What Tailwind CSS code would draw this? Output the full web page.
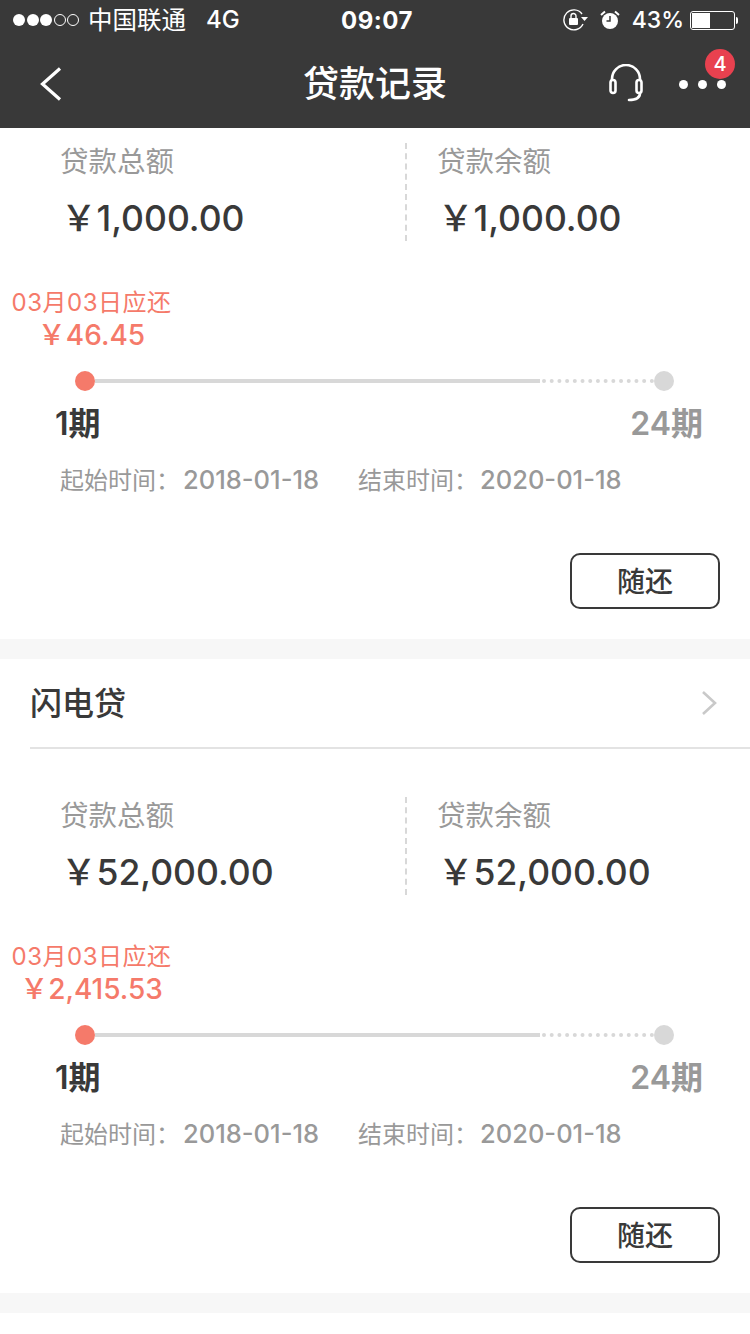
<!DOCTYPE html>
<html lang="zh"><head><meta charset="utf-8">
<script src="https://cdn.jsdelivr.net/npm/@tailwindcss/browser@4"></script>
</head>
<body class="w-[750px] h-[1334px] overflow-hidden bg-white font-['Inter','Noto_Sans_CJK_SC',sans-serif]">
<header class="h-[128px] bg-[#393939] text-white relative">
  <div class="h-[40px] flex items-center justify-between pl-[13px] pr-[12px] relative">
    <div class="flex items-center text-[24.5px] leading-none">
      <div class="flex gap-[1.500px] items-center">
        <i class="w-[12px] h-[12px] rounded-full bg-white"></i><i class="w-[12px] h-[12px] rounded-full bg-white"></i><i class="w-[12px] h-[12px] rounded-full bg-white"></i>
        <i class="w-[12px] h-[12px] rounded-full border border-white"></i><i class="w-[12px] h-[12px] rounded-full border border-white"></i>
      </div>
      <span class="ml-[9px]">中国联通</span><span class="ml-[20px] font-medium text-[24px]">4G</span>
    </div>
    <span class="absolute left-[341px] top-[7px] text-[24px] leading-[28px] font-bold tracking-[0.5px]">09:07</span>
    <div class="flex items-center">
      <svg width="26" height="22" viewBox="0 0 26 22" fill="none" class="mr-[11px]"><path d="M19 5A10 10 0 1 0 20 15" stroke="#fff" stroke-width="1.4"/><path d="M18 8h7l-3.5 4z" fill="#fff"/><rect x="6" y="9" width="9" height="7" rx="1" fill="#fff"/><path d="M8 9V7a2.5 2.5 0 0 1 5 0v2" stroke="#fff" stroke-width="1.4"/></svg>
      <svg width="20" height="20" viewBox="0 0 20 20" class="mr-[12px]"><circle cx="10" cy="11" r="8" fill="#fff"/><path d="M10 6v5H6.5" stroke="#393939" stroke-width="1.5" fill="none"/><path d="M1 5 5 1.500M19 5 15 1.500" stroke="#fff" stroke-width="2"/></svg>
      <span class="text-[23px] leading-none font-medium">43%</span>
      <div class="ml-[6px] w-[45px] h-[19px] rounded-[3px] border border-white p-[1px]"><div class="w-[18px] h-full bg-white"></div></div>
      <i class="w-[2px] h-[7px] bg-white rounded-r-sm ml-[1px]"></i>
    </div>
  </div>
  <div class="h-[88px] flex items-center justify-center relative">
    <svg class="absolute left-[40px] top-[27px]" width="22" height="34" viewBox="0 0 22 34" fill="none"><path d="M20 1.500 2.500 17 20 32.500" stroke="#fff" stroke-width="3.200"/></svg>
    <h1 class="text-[36px] leading-none font-medium -mt-[1px]">贷款记录</h1>
    <svg class="absolute left-[608px] top-[24px]" width="36" height="40" viewBox="0 0 36 40" fill="none" stroke="#fff" stroke-width="2.600"><path d="M4 17V15a14 14 0 0 1 28 0v2"/><rect x="2.500" y="16" width="5" height="13" rx="2.500"/><rect x="28.500" y="16" width="5" height="13" rx="2.500"/><path d="M32 29c0 5-4 7-11 7" stroke-linecap="round"/></svg>
    <div class="absolute left-[679px] top-[40px] flex gap-[10px]">
      <i class="w-[9px] h-[9px] rounded-full bg-white"></i><i class="w-[9px] h-[9px] rounded-full bg-white"></i><i class="w-[9px] h-[9px] rounded-full bg-white"></i>
    </div>
    <span class="absolute left-[705px] top-[9px] w-[30px] h-[30px] rounded-full bg-[#e8414f] text-[20px] font-medium leading-[30px] text-center">4</span>
  </div>
</header>

<main>
  <section class="h-[511px] pt-[15px] flex flex-col">
    <div class="flex h-[98px]">
      <div class="w-[407px] border-r-2 border-dashed border-[#d8d8d8] pl-[60px] pt-[1px]">
        <p class="text-[28.5px] leading-[36px] text-[#999]">贷款总额</p>
        <p class="mt-[19px] pl-[1px] text-[35.5px] leading-[40px] font-medium text-[#393939]">￥1,000.00</p>
      </div>
      <div class="pl-[30px] pt-[1px]">
        <p class="text-[28.5px] leading-[36px] text-[#999]">贷款余额</p>
        <p class="mt-[19px] pl-[1px] text-[35.5px] leading-[40px] font-medium text-[#393939]">￥1,000.00</p>
      </div>
    </div>
    <div class="mt-[46px] w-[183px] text-center text-[#f57a6a]">
      <p class="text-[24px] leading-[32px] tracking-[0.5px]">03月03日应还</p>
      <p class="text-[28px] leading-[32px] font-medium">￥46.45</p>
    </div>
    <div class="mt-[20px] ml-[75px] w-[599px] h-[20px] flex items-center">
      <i class="w-[20px] h-[20px] rounded-full bg-[#f57a6a] shrink-0"></i>
      <i class="w-[445px] h-[4px] bg-[#d8d8d8]"></i>
      <i class="flex-1 ml-[2px] border-t-[4px] border-dotted border-[#d8d8d8]"></i>
      <i class="w-[20px] h-[20px] rounded-full bg-[#d8d8d8] shrink-0"></i>
    </div>
    <div class="mt-[15px] pl-[55px] pr-[47px] flex justify-between text-[32px] leading-[36px] font-semibold">
      <span class="text-[#393939]">1期</span><span class="text-[#999]">24期</span>
    </div>
    <div class="mt-[20px] pl-[60px] flex items-baseline text-[25.5px] leading-[36px] text-[#999] font-medium">
      <span class="w-[298px]"><span class="text-[24px] font-normal mr-[3px]">起始时间：</span>2018-01-18</span><span><span class="text-[24px] font-normal mr-[2px]">结束时间：</span>2020-01-18</span>
    </div>
    <div class="mt-[54px] pr-[30px] flex justify-end">
      <button class="w-[150px] h-[56px] pt-[1px] rounded-[10px] border-2 border-[#393939] text-[28px] font-medium text-[#393939]">随还</button>
    </div>
  </section>
  <div class="h-[20px] bg-[#f7f7f7]"></div>

  <section class="h-[634px] flex flex-col">
    <div class="ml-[30px] h-[90px] border-b-2 border-[#e3e3e3] flex items-center justify-between pr-[33px]">
      <h2 class="text-[32px] leading-none font-medium text-[#393939] mt-[2px]">闪电贷</h2>
      <svg width="16" height="26" viewBox="0 0 16 26" fill="none"><path d="M2 2 14 13 2 24" stroke="#c9c9c9" stroke-width="2.600"/></svg>
    </div>
    <div class="flex h-[98px] mt-[48px]">
      <div class="w-[407px] border-r-2 border-dashed border-[#d8d8d8] pl-[60px] pt-[1px]">
        <p class="text-[28.5px] leading-[36px] text-[#999]">贷款总额</p>
        <p class="mt-[19px] pl-[1px] text-[35.5px] leading-[40px] font-medium text-[#393939]">￥52,000.00</p>
      </div>
      <div class="pl-[30px] pt-[1px]">
        <p class="text-[28.5px] leading-[36px] text-[#999]">贷款余额</p>
        <p class="mt-[19px] pl-[1px] text-[35.5px] leading-[40px] font-medium text-[#393939]">￥52,000.00</p>
      </div>
    </div>
    <div class="mt-[46px] w-[183px] text-center text-[#f57a6a]">
      <p class="text-[24px] leading-[32px] tracking-[0.5px]">03月03日应还</p>
      <p class="text-[28px] leading-[32px] font-medium">￥2,415.53</p>
    </div>
    <div class="mt-[20px] ml-[75px] w-[599px] h-[20px] flex items-center">
      <i class="w-[20px] h-[20px] rounded-full bg-[#f57a6a] shrink-0"></i>
      <i class="w-[445px] h-[4px] bg-[#d8d8d8]"></i>
      <i class="flex-1 ml-[2px] border-t-[4px] border-dotted border-[#d8d8d8]"></i>
      <i class="w-[20px] h-[20px] rounded-full bg-[#d8d8d8] shrink-0"></i>
    </div>
    <div class="mt-[15px] pl-[55px] pr-[47px] flex justify-between text-[32px] leading-[36px] font-semibold">
      <span class="text-[#393939]">1期</span><span class="text-[#999]">24期</span>
    </div>
    <div class="mt-[20px] pl-[60px] flex items-baseline text-[25.5px] leading-[36px] text-[#999] font-medium">
      <span class="w-[298px]"><span class="text-[24px] font-normal mr-[3px]">起始时间：</span>2018-01-18</span><span><span class="text-[24px] font-normal mr-[2px]">结束时间：</span>2020-01-18</span>
    </div>
    <div class="mt-[54px] pr-[30px] flex justify-end">
      <button class="w-[150px] h-[56px] pt-[1px] rounded-[10px] border-2 border-[#393939] text-[28px] font-medium text-[#393939]">随还</button>
    </div>
  </section>
  <div class="h-[20px] bg-[#f7f7f7]"></div>
</main>
</body></html>
